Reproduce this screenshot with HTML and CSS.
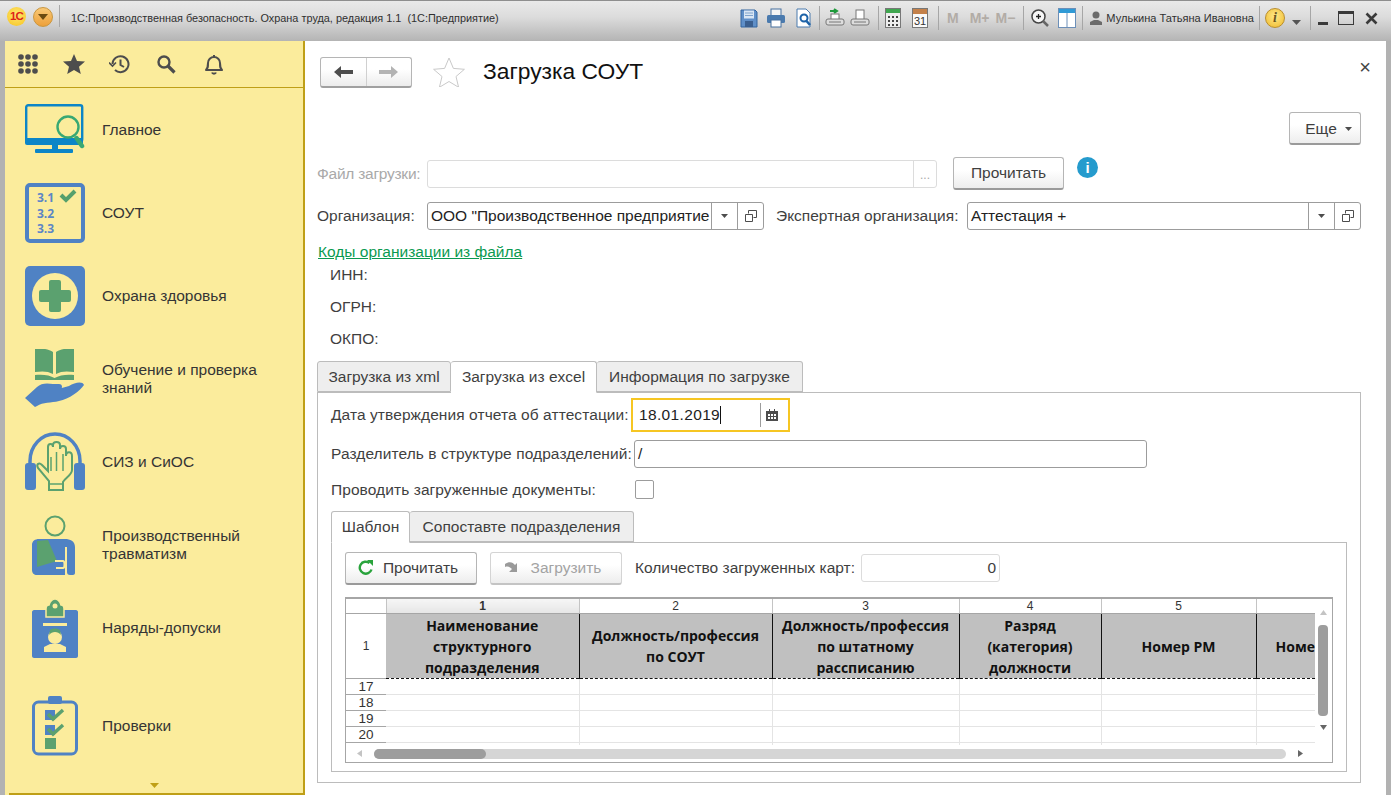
FILE: index.html
```html
<!DOCTYPE html>
<html lang="ru">
<head>
<meta charset="utf-8">
<title>Загрузка СОУТ</title>
<link rel="stylesheet" href="styles.css">
</head>
<body>
<div class="app">
  <header class="titlebar">
    <div class="logo-1c">1С</div>
    <div class="menu-circle"><svg width="10" height="6" viewBox="0 0 10 6"><path d="M0 0h10L5 6z" fill="#6b4a10"/></svg></div>
    <div class="tb-sep first"></div>
    <div class="app-title">1С:Производственная безопасность. Охрана труда, редакция 1.1&nbsp; (1С:Предприятие)</div>
    <div class="tools">
      <svg class="ti" width="18" height="20" viewBox="0 0 18 20"><path d="M1 2h14l2 2v15H1z" fill="#5f8fc8" stroke="#33649f"/><rect x="4" y="2.500" width="10" height="8" fill="#d9e6f4"/><path d="M5 5h8M5 7.500h8" stroke="#7fa3cc"/><rect x="5" y="13" width="8" height="6" fill="#3a5f8f"/></svg>
      <svg class="ti" width="20" height="20" viewBox="0 0 20 20"><rect x="5" y="1" width="10" height="7" fill="#f4f4f4" stroke="#47709f"/><rect x="1" y="7" width="18" height="8" rx="1.500" fill="#4a7aae"/><rect x="5" y="12" width="10" height="7" fill="#fff" stroke="#47709f"/></svg>
      <svg class="ti" width="18" height="20" viewBox="0 0 18 20"><path d="M2 1h9l4 4v14H2z" fill="#fff" stroke="#4a7aae"/><circle cx="9" cy="10" r="3.500" fill="none" stroke="#1c62a8" stroke-width="2"/><path d="M11.500 13l3.500 4" stroke="#1c62a8" stroke-width="2.500"/></svg>
      <i class="tsep s1"></i>
      <svg class="ti" width="20" height="20" viewBox="0 0 20 20"><path d="M5 3h7M9 1l3 2-3 2" fill="none" stroke="#1f9a3c" stroke-width="2"/><rect x="6" y="6" width="8" height="6" fill="#fff" stroke="#777"/><rect x="1" y="11" width="18" height="6" rx="2" fill="#ddd" stroke="#777"/><path d="M4 14h12" stroke="#777"/></svg>
      <svg class="ti" width="20" height="20" viewBox="0 0 20 20"><rect x="6" y="2" width="8" height="10" fill="#fff" stroke="#777"/><rect x="1" y="11" width="18" height="6" rx="2" fill="#ddd" stroke="#777"/><path d="M4 14h12" stroke="#777"/></svg>
      <i class="tsep s2"></i>
      <svg class="ti" width="16" height="20" viewBox="0 0 16 20"><rect x=".5" y=".5" width="15" height="19" fill="#eee" stroke="#777"/><rect x="1" y="1" width="14" height="4" fill="#3fa64f"/><path d="M3 8h2v2H3zM7 8h2v2H7zM11 8h2v2h-2zM3 12h2v2H3zM7 12h2v2H7zM11 12h2v2h-2zM3 16h2v2H3zM7 16h2v2H7zM11 16h2v2h-2z" fill="#444"/></svg>
      <svg class="ti" width="16" height="20" viewBox="0 0 16 20"><rect x=".5" y=".5" width="15" height="19" fill="#fafafa" stroke="#777"/><rect x="1" y="1" width="14" height="5" fill="#c4814a"/><text x="8" y="17" class="cal-num">31</text></svg>
      <i class="tsep s3"></i>
      <span class="mem m1">M</span><span class="mem m2">M+</span><span class="mem m3">M−</span>
      <i class="tsep s4"></i>
      <svg class="ti" width="20" height="20" viewBox="0 0 20 20"><circle cx="8.500" cy="8.500" r="6.500" fill="#f6f6f6" stroke="#444" stroke-width="1.500"/><path d="M6 8.500h5M8.500 6v5" stroke="#222" stroke-width="1.300"/><path d="M13 13l5 5" stroke="#666" stroke-width="2.500"/></svg>
      <svg class="ti" width="18" height="20" viewBox="0 0 18 20"><rect x=".5" y=".5" width="17" height="19" fill="#fff" stroke="#6c8fb8"/><rect x="1" y="1" width="16" height="4" fill="#2f9ad6"/><path d="M9 5v14" stroke="#6c8fb8"/></svg>
      <i class="tsep s5"></i>
      <svg class="ti" width="12" height="14" viewBox="0 0 12 14"><circle cx="6" cy="4" r="3.500" fill="#6b6b6b"/><path d="M0 14v-3l4-2h4l4 2v3z" fill="#6b6b6b"/></svg>
      <span class="user">Мулькина Татьяна Ивановна</span>
      <i class="tsep s6"></i>
      <div class="info-1c">i</div>
      <svg class="ti caret" width="9" height="5" viewBox="0 0 9 5"><path d="M0 0h9L4.500 5z" fill="#555"/></svg>
      <i class="tsep s7"></i>
      <div class="win-min"></div>
      <div class="win-max"></div>
      <svg class="ti" width="13" height="13" viewBox="0 0 13 13"><path d="M1.500 1.500l10 10M11.500 1.500l-10 10" stroke="#3a3a3a" stroke-width="2.600"/></svg>
    </div>
  </header>

  <div class="workspace">
    <aside class="sidebar">
      <div class="side-tools">
        <svg width="20" height="20" viewBox="0 0 20 20" fill="#4d4d4d"><circle cx="3" cy="3" r="2.800"/><circle cx="10" cy="3" r="2.800"/><circle cx="17" cy="3" r="2.800"/><circle cx="3" cy="10" r="2.800"/><circle cx="10" cy="10" r="2.800"/><circle cx="17" cy="10" r="2.800"/><circle cx="3" cy="17" r="2.800"/><circle cx="10" cy="17" r="2.800"/><circle cx="17" cy="17" r="2.800"/></svg>
        <svg class="st-star" width="22" height="20" viewBox="0 0 22 20"><path d="M11 0l3 7 8 .6-6 5.100L17.800 20 11 16l-6.800 4L6 12.700 0 7.600 8 7z" fill="#4d4d4d"/></svg>
        <svg class="st-hist" width="21" height="20" viewBox="0 0 21 20" fill="none" stroke="#4d4d4d" stroke-width="2"><path d="M3.500 10a8 8 0 1 1 2.500 6"/><path d="M0 8.500l3.500 3.500 3.500-3.500" stroke-width="1.600"/><path d="M11.500 5.500V11l3.500 2"/></svg>
        <svg class="st-search" width="19" height="19" viewBox="0 0 19 19" fill="none" stroke="#4d4d4d"><circle cx="7" cy="7" r="5.500" stroke-width="2.400"/><path d="M11 11l6.500 6.500" stroke-width="3.200"/></svg>
        <svg class="st-bell" width="18" height="21" viewBox="0 0 18 21" fill="none" stroke="#4d4d4d" stroke-width="2"><path d="M1 16c2-2 2-3 2-7a6 6 0 0 1 12 0c0 4 0 5 2 7z" stroke-linejoin="round"/><path d="M9 1v2M7 18.500c.5 1.500 3.500 1.500 4 0"/></svg>
      </div>
      <nav class="side-list">
        <a class="side-item">
          <svg class="side-icon" width="60" height="60" viewBox="0 0 60 60"><rect x="1.200" y="5.200" width="56" height="36" rx="2" fill="none" stroke="#0c85c7" stroke-width="2.400"/><path d="M0 38h58v5a2 2 0 0 1-2 2H2a2 2 0 0 1-2-2z" fill="#0c85c7"/><rect x="27" y="45" width="6" height="4" fill="#0c85c7"/><rect x="10" y="49" width="38" height="4" rx="1" fill="#0c85c7"/><circle cx="43" cy="27" r="10.500" fill="#fbec9c" stroke="#39a873" stroke-width="2.400"/><path d="M51.500 38l5.500 8" stroke="#39a873" stroke-width="4.500" stroke-linecap="round"/></svg>
          <span>Главное</span>
        </a>
        <a class="side-item">
          <svg class="side-icon" width="60" height="60" viewBox="0 0 60 60"><rect x="2" y="2" width="56" height="56" rx="3" fill="none" stroke="#4f82c4" stroke-width="4"/><text x="12" y="19" class="soft-num">3.1</text><text x="12" y="35" class="soft-num">3.2</text><text x="12" y="50" class="soft-num">3.3</text><path d="M36 12l5 5 9-9" fill="none" stroke="#55a06c" stroke-width="4"/></svg>
          <span>СОУТ</span>
        </a>
        <a class="side-item">
          <svg class="side-icon" width="60" height="60" viewBox="0 0 60 60"><rect width="60" height="60" rx="5" fill="#4f82c4"/><circle cx="30" cy="30" r="23" fill="#fbec9c"/><path d="M24 16a2 2 0 0 1 2-2h8a2 2 0 0 1 2 2v8h8a2 2 0 0 1 2 2v8a2 2 0 0 1-2 2h-8v8a2 2 0 0 1-2 2h-8a2 2 0 0 1-2-2v-8h-8a2 2 0 0 1-2-2v-8a2 2 0 0 1 2-2h8z" fill="#5ba16f"/></svg>
          <span>Охрана здоровья</span>
        </a>
        <a class="side-item">
          <svg class="side-icon" width="60" height="60" viewBox="0 0 60 60"><path d="M10 0c7-1 14 0 18 3v22c-5-3-11-3-18-2zM49 0c-7-1-14 0-18 3v22c5-3 11-3 18-2z" fill="#5ba16f"/><path d="M10 26c7-1 15 0 19.500 3 5-3 13-4 19.500-3v5H10z" fill="#5ba16f"/><path d="M0 49L12 38c4-4 10-4 16-3h6c4 0 4 5 0 6l-8 1 18-5c6-4 14-5 15-1-4 6-15 14-25 16-8 2-16 1-22 5l-2 1z" fill="#4f82c4"/></svg>
          <span>Обучение и проверка<br>знаний</span>
        </a>
        <a class="side-item">
          <svg class="side-icon" width="60" height="60" viewBox="0 0 60 60"><path d="M5 34V29a25 27 0 0 1 50 0v5" fill="none" stroke="#4f82c4" stroke-width="3.500"/><rect y="31" width="11" height="27" rx="3" fill="#4f82c4"/><rect x="49" y="31" width="11" height="27" rx="3" fill="#4f82c4"/><path d="M24 58V49L13 36c-2-4 1-6 4-3l6 6V15c0-4 5-4 5 0v-2c0-4 7-4 7 0v4c0-4 6-4 6 0v7c0-5 6-5 6 0v14c0 5-7 8-9 12v8z" fill="none" stroke="#5ba16f" stroke-width="2"/><path d="M24 52h13M26 25v14M31.500 20v19M38 22v17" stroke="#5ba16f" stroke-width="1.500"/></svg>
          <span>СИЗ и СиОС</span>
        </a>
        <a class="side-item">
          <svg class="side-icon" width="60" height="60" viewBox="0 0 60 60"><circle cx="30" cy="11" r="9.500" fill="none" stroke="#5ba16f" stroke-width="2"/><path d="M7 30c0-4 3-6 7-6h26c5 0 10 2 10 8v26c0 1-1 2-2 2h-3c-2 0-3-1-3-3V32h-2v28H12c-3 0-5-2-5-5z" fill="#4f82c4"/><path d="M12 26l11-1 9 21-20 6z" fill="#5ba16f"/><path d="M30 46h8c2 0 2 7 0 7h-7" fill="none" stroke="#fbec9c" stroke-width="2"/></svg>
          <span>Производственный<br>травматизм</span>
        </a>
        <a class="side-item">
          <svg class="side-icon" width="60" height="60" viewBox="0 0 60 60"><path d="M7 14c0-1 1-2 2-2h42c1 0 2 1 2 2v44c0 1-1 2-2 2H9c-1 0-2-1-2-2z" fill="#4f82c4"/><path d="M21 19v-8c0-3 2-4 3-4 1-4 4-6 6-6s5 2 6 6c1 0 3 1 3 4v8z" fill="#5ba16f" stroke="#fbec9c" stroke-width="1.500"/><circle cx="30" cy="8" r="2.500" fill="#fbec9c"/><rect x="18" y="25" width="24" height="3" fill="#fbec9c"/><circle cx="30" cy="39" r="7" fill="#fbec9c"/><path d="M19 54v-5l6-3h10l6 3v5z" fill="#fbec9c"/><path d="M24 37c3-4 9-4 12 0l-1-5c-3-2-8-2-10 0z" fill="#5ba16f"/></svg>
          <span>Наряды-допуски</span>
        </a>
        <a class="side-item last">
          <svg class="side-icon" width="60" height="60" viewBox="0 0 60 60"><rect x="8.500" y="6" width="43" height="52" rx="5" fill="none" stroke="#4f82c4" stroke-width="3"/><rect x="23" y="0" width="14" height="8" rx="2" fill="#4f82c4"/><rect x="20" y="14" width="10" height="10" fill="#4f82c4"/><rect x="20" y="29" width="10" height="10" fill="#4f82c4"/><rect x="20" y="42" width="11" height="11" fill="#5ba16f"/><path d="M23 18l5 5 10-9M23 33l5 5 10-9" fill="none" stroke="#5ba16f" stroke-width="3.500"/></svg>
          <span>Проверки</span>
        </a>
      </nav>
      <div class="side-more"><svg width="9" height="5" viewBox="0 0 9 5"><path d="M0 0h9L4.500 5z" fill="#bf9f17"/></svg></div>
      <div class="side-bottom"></div>
    </aside>

    <main class="main">
      <div class="head">
        <div class="nav-btns">
          <div class="nav-btn"><svg width="19" height="12" viewBox="0 0 19 12"><path d="M0 6l7-6v4h12v4H7v4z" fill="#4d4d4d"/></svg></div>
          <div class="nav-btn right"><svg width="19" height="12" viewBox="0 0 19 12"><path d="M19 6l-7-6v4H0v4h12v4z" fill="#b3b3b3"/></svg></div>
        </div>
        <svg class="fav" width="32" height="30" viewBox="0 0 32 30"><path d="M16 1l4.400 10.400 11 .9-8.400 7.200 2.600 10.800L16 24.500 6.400 30.300 9 19.500.6 12.300l11-.9z" fill="#fff" stroke="#c9c9c9"/></svg>
        <h1>Загрузка СОУТ</h1>
        <div class="close">×</div>
      </div>

      <div class="more-row">
        <div class="btn more">Еще<svg width="7" height="4" viewBox="0 0 7 4"><path d="M0 0h7L3.500 4z" fill="#4d4d4d"/></svg></div>
      </div>

      <div class="row file-row">
        <label class="lbl first disabled">Файл загрузки:</label>
        <div class="field disabled file-field"><span class="val"></span><span class="dots">...</span></div>
        <div class="btn read">Прочитать</div>
        <div class="info">i</div>
      </div>

      <div class="row org-row">
        <label class="lbl first">Организация:</label>
        <div class="field org"><span class="val">ООО "Производственное предприятие</span>
          <span class="fb"><svg width="7" height="4" viewBox="0 0 7 4"><path d="M0 0h7L3.500 4z" fill="#4d4d4d"/></svg></span>
          <span class="fb"><svg width="12" height="12" viewBox="0 0 12 12" fill="none" stroke="#4d4d4d"><path d="M3.500 3.500V.5h8v7h-3"/><path d="M.5 4.500h7v7h-7z"/></svg></span>
        </div>
        <label class="lbl exp">Экспертная организация:</label>
        <div class="field expert"><span class="val">Аттестация +</span>
          <span class="fb"><svg width="7" height="4" viewBox="0 0 7 4"><path d="M0 0h7L3.500 4z" fill="#4d4d4d"/></svg></span>
          <span class="fb"><svg width="12" height="12" viewBox="0 0 12 12" fill="none" stroke="#4d4d4d"><path d="M3.500 3.500V.5h8v7h-3"/><path d="M.5 4.500h7v7h-7z"/></svg></span>
        </div>
      </div>

      <a class="link">Коды организации из файла</a>
      <div class="code code-first">ИНН:</div>
      <div class="code">ОГРН:</div>
      <div class="code">ОКПО:</div>

      <div class="tabs">
        <div class="tab t-xml">Загрузка из xml</div>
        <div class="tab active t-excel">Загрузка из excel</div>
        <div class="tab t-info">Информация по загрузке</div>
      </div>
      <section class="panel">
        <div class="row date-row">
          <label class="lbl wide">Дата утверждения отчета об аттестации:</label>
          <div class="date-field"><span class="val">18.01.2019<i class="cursor"></i></span>
            <span class="cal"><svg width="12" height="12" viewBox="0 0 12 12"><path d="M0 2h3V0h1v2h4V0h1v2h3v10H0z" fill="#4d4d4d"/><path d="M2 5h2v2H2zM5 5h2v2H5zM8 5h2v2H8zM2 8h2v2H2zM5 8h2v2H5zM8 8h2v2H8z" fill="#fff"/></svg></span>
          </div>
        </div>
        <div class="row sep-row">
          <label class="lbl wide">Разделитель в структуре подразделений:</label>
          <div class="field sep-field"><span class="val">/</span></div>
        </div>
        <div class="row check-row">
          <label class="lbl wide">Проводить загруженные документы:</label>
          <div class="check"></div>
        </div>

        <div class="tabs inner">
          <div class="tab active t-tpl">Шаблон</div>
          <div class="tab t-match">Сопоставте подразделения</div>
        </div>
        <section class="panel subpanel">
          <div class="row tool-row">
            <div class="btn ic-btn"><svg width="16" height="16" viewBox="0 0 16 16" fill="none"><path d="M13.500 9.500A6 6 0 1 1 11.500 3" stroke="#29a33c" stroke-width="2.400"/><path d="M9 0h6v6z" fill="#29a33c"/></svg>Прочитать</div>
            <div class="btn ic-btn off"><svg width="17" height="14" viewBox="0 0 17 14"><path d="M0 3c4-3 8-2 10 1l2-2v9H4l3-3C5 6 3 5 0 6z" fill="#9a9a9a"/></svg>Загрузить</div>
            <label class="lbl count">Количество загруженных карт:</label>
            <div class="field count-field">0</div>
          </div>

          <div class="sheet">
            <div class="sheet-top">
              <div class="grid-clip">
                <table class="grid">
                  <colgroup><col class="c0"><col class="c1"><col class="c2"><col class="c3"><col class="c4"><col class="c5"><col class="c6"></colgroup>
                  <tr class="col-heads"><th></th><th class="cur">1</th><th>2</th><th>3</th><th>4</th><th>5</th><th></th></tr>
                  <tr class="head-row">
                    <th class="rn">1</th>
                    <td>Наименование<br>структурного<br>подразделения</td>
                    <td>Должность/профессия<br>по СОУТ</td>
                    <td>Должность/профессия<br>по штатному<br>рассписанию</td>
                    <td>Разряд<br>(категория)<br>должности</td>
                    <td>Номер РМ</td>
                    <td class="clip"><span>Номер</span></td>
                  </tr>
                  <tr><th class="rn">17</th><td></td><td></td><td></td><td></td><td></td><td></td></tr>
                  <tr><th class="rn">18</th><td></td><td></td><td></td><td></td><td></td><td></td></tr>
                  <tr><th class="rn">19</th><td></td><td></td><td></td><td></td><td></td><td></td></tr>
                  <tr><th class="rn">20</th><td></td><td></td><td></td><td></td><td></td><td></td></tr>
                  <tr><th class="rn"></th><td></td><td></td><td></td><td></td><td></td><td></td></tr>
                </table>
              </div>
              <div class="vscroll">
                <svg width="7" height="5" viewBox="0 0 7 5"><path d="M3.500 0L7 5H0z" fill="#c4c4c4"/></svg>
                <div class="vthumb"></div>
                <svg width="7" height="5" viewBox="0 0 7 5"><path d="M3.500 5L7 0H0z" fill="#666"/></svg>
              </div>
            </div>
            <div class="hscroll">
              <svg width="5" height="7" viewBox="0 0 5 7"><path d="M0 3.500L5 0v7z" fill="#c4c4c4"/></svg>
              <div class="htrack"><div class="hthumb"></div></div>
              <svg width="5" height="7" viewBox="0 0 5 7"><path d="M5 3.500L0 0v7z" fill="#666"/></svg>
            </div>
          </div>
        </section>
      </section>
    </main>
  </div>
</div>
</body>
</html>
```

FILE: styles.css
```css
* { box-sizing: border-box; }
html, body { margin: 0; height: 795px; overflow: hidden; }
body { background: #b2b2b2; font-family: "Liberation Sans", Arial, sans-serif; font-size: 15.5px; color: #3f3f3f; }
.app { display: flex; flex-direction: column; height: 795px; }

/* title bar */
.titlebar { height: 41px; flex: none; display: flex; align-items: flex-start; padding-top: 6px; background: linear-gradient(#e9e9e9 0, #dcdcdc 40%, #b4b4b4 100%); border-top: 1px solid #8e8e8e; }
.logo-1c { width: 19px; height: 19px; margin-left: 7px; border-radius: 50%; background: radial-gradient(circle at 50% 40%, #ffe873, #f6c21c); color: #dd2418; font: bold 11.5px/19px "Liberation Sans", sans-serif; text-align: center; letter-spacing: -0.8px; }
.menu-circle { width: 20px; height: 20px; margin-left: 7px; border-radius: 50%; background: linear-gradient(#f9c977, #eda03a); border: 1px solid #c9963f; display: flex; align-items: center; justify-content: center; }
.tb-sep.first { width: 1px; height: 22px; background: #a8a8a8; margin-left: 6px; margin-top: -2px; }
.app-title { margin-left: 11px; font: 10.9px/22px "Liberation Sans", sans-serif; color: #303030; white-space: nowrap; }
.tools { margin-left: auto; display: flex; align-items: center; height: 22px; width: 651px; flex: none; }
.tools .ti { flex: none; }
.tools > :nth-child(2) { margin-left: 8px; }
.tools > :nth-child(3) { margin-left: 9px; }
.tsep { width: 1px; height: 24px; background: #a6a6a6; flex: none; }
.tools .s1 { margin-left: 6px; }
.tools .s1 + svg { margin-left: 5px; }
.tools .s1 + svg + svg { margin-left: 5px; }
.tools .s2 { margin-left: 8px; }
.tools .s2 + svg { margin-left: 6px; }
.tools .s2 + svg + svg { margin-left: 11px; }
.tools .s3 { margin-left: 10px; }
.mem { font: bold 14px/22px "Liberation Sans", sans-serif; color: #b2aca6; flex: none; }
.m1 { margin-left: 8px; }
.m2 { margin-left: 11px; }
.m3 { margin-left: 6px; }
.tools .s4 { margin-left: 8px; }
.tools .s4 + svg { margin-left: 6px; }
.tools .s4 + svg + svg { margin-left: 8px; }
.tools .s5 { margin-left: 6px; }
.tools .s5 + svg { margin-left: 7px; }
.user { margin-left: 4px; font: 11.05px/22px "Liberation Sans", sans-serif; color: #303030; white-space: nowrap; flex: none; }
.tools .s6 { margin-left: 5px; }
.info-1c { width: 20px; height: 20px; margin-left: 5px; border-radius: 50%; background: radial-gradient(circle at 50% 40%, #ffe98a, #efb92a); border: 1px solid #b98e2e; color: #6a5520; font: italic bold 14px/18px "Liberation Serif", serif; text-align: center; flex: none; }
.tools .caret { margin-left: 7px; margin-top: 8px; }
.tools .s7 { margin-left: 9px; }
.win-min { width: 10px; height: 3px; background: #3a3a3a; margin-left: 7px; margin-top: 10px; flex: none; }
.win-max { width: 16px; height: 14px; border: 1px solid #3a3a3a; border-top-width: 3px; margin-left: 10px; flex: none; }
.tools > svg:last-child { margin-left: 11px; }
.cal-num { font: 11px "Liberation Sans", sans-serif; fill: #333; text-anchor: middle; }

/* workspace */
.workspace { flex: 1; display: flex; margin: 0 5px; min-height: 0; }

/* sidebar */
.sidebar { width: 300px; flex: none; background: #fbec9c; border-right: 2px solid #bf9f17; display: flex; flex-direction: column; }
.side-tools { height: 47px; flex: none; display: flex; align-items: center; padding-left: 13px; border-bottom: 1px solid #bf9f17; }
.st-star { margin-left: 25px; }
.st-hist { margin-left: 24px; }
.st-search { margin-left: 27px; }
.st-bell { margin-left: 29px; }
.side-list { flex: 1; display: flex; flex-direction: column; min-height: 0; }
.side-item { height: 83px; flex: none; display: flex; align-items: center; padding-left: 20px; color: #353535; line-height: 18px; }
.side-item.last { margin-top: 15px; }
.side-item span { margin-left: 17px; }
.side-icon { flex: none; }
.soft-num { font: bold 12px "Open Sans", sans-serif; fill: #5c86c6; }
.side-more { height: 10px; flex: none; display: flex; justify-content: center; align-items: flex-start; }
.side-bottom { height: 2px; flex: none; margin-left: 4px; background: #bf9f17; }

/* main */
.main { flex: 1; min-width: 0; background: #fff; padding: 16px 25px 0 12px; display: flex; flex-direction: column; }
.head { display: flex; align-items: flex-start; height: 31px; flex: none; }
.nav-btns { display: flex; margin-left: 3px; width: 92px; height: 31px; border: 1px solid #b5b5b5; border-bottom: 2px solid #a0a0a0; border-radius: 3px; background: linear-gradient(#fff 40%, #ececec); }
.nav-btn { width: 46px; display: flex; align-items: center; justify-content: center; }
.nav-btn.right { border-left: 1px solid #d0d0d0; }
.fav { margin-left: 21px; }
h1 { margin: 0 0 0 18px; font: 400 22.8px/28px "Liberation Sans", sans-serif; color: #111; }
.close { margin-left: auto; margin-right: -10px; font: 20px/20px "Liberation Sans", sans-serif; color: #444; }
.more-row { display: flex; justify-content: flex-end; margin-top: 24px; flex: none; }
.btn { height: 33px; display: flex; align-items: center; justify-content: center; border: 1px solid #b5b5b5; border-bottom: 2px solid #9a9a9a; border-radius: 3px; background: linear-gradient(#fff 40%, #ededed); color: #3f3f3f; flex: none; }
.btn.more { width: 72px; gap: 8px; padding: 1px 0 0 7px; }
.row { display: flex; align-items: center; flex: none; }
.file-row { margin-top: 12px; height: 33px; align-items: flex-start; }
.file-row .lbl { line-height: 33px; height: 33px; letter-spacing: -0.25px; }
.lbl { white-space: nowrap; flex: none; }
.lbl.first { width: 110px; }
.disabled { color: #a9a9a9; }
.field { height: 28px; border: 1px solid #9c9c9c; border-radius: 3px; background: #fff; display: flex; align-items: center; flex: none; color: #222; }
.field.disabled { border-color: #dcdcdc; }
.val { flex: 1; min-width: 0; padding-left: 3px; white-space: nowrap; overflow: hidden; }
.file-field { width: 510px; margin-top: 3px; }
.dots { width: 23px; height: 100%; border-left: 1px solid #dcdcdc; color: #a9a9a9; text-align: center; line-height: 28px; font-size: 12px; }
.read { width: 111px; margin-left: 16px; }
.info { width: 21px; height: 21px; margin-left: 13px; border-radius: 50%; background: #259bcd; color: #fff; font: bold 15px/21px "Liberation Sans", sans-serif; text-align: center; }
.org-row { margin-top: 12px; height: 28px; }
.fb { width: 26px; height: 100%; border-left: 1px solid #9c9c9c; display: flex; align-items: center; justify-content: center; flex: none; }
.org { width: 337px; }
.exp { margin-left: 12px; width: 191px; }
.expert { width: 394px; }
.link { display: block; align-self: flex-start; margin: 14px 0 0 1px; line-height: 16px; color: #0a9a50; text-decoration: underline; white-space: nowrap; flex: none; }
.code { height: 32px; line-height: 32px; padding-left: 13px; flex: none; }
.code-first { margin-top: -1px; }

/* tabs */
.tabs { display: flex; margin-top: 6px; height: 31px; flex: none; position: relative; z-index: 1; }
.tab { height: 31px; line-height: 29px; text-align: center; border: 1px solid #bcbcbc; border-left-width: 0; border-radius: 3px 3px 0 0; background: #eeeeee; color: #3f3f3f; }
.tab:first-child { border-left-width: 1px; }
.tab.active { background: #fff; border-bottom-color: #fff; height: 32px; }
.t-xml { width: 134px; }
.t-excel { width: 146px; }
.t-info { width: 206px; }
.t-tpl { width: 79px; }
.t-match { width: 224px; }
.panel { border: 1px solid #bcbcbc; flex: none; }
.main > .panel { height: 391px; padding: 5px 13px 0 13px; }
.lbl.wide { width: 300px; letter-spacing: 0.08px; }
.date-row { height: 34px; }
.date-field { width: 159px; height: 34px; border: 2px solid #f6c623; display: flex; align-items: center; background: #fff; color: #222; }
.date-field .val { padding-left: 6px; letter-spacing: 0.35px; }
.cursor { display: inline-block; width: 1px; height: 18px; background: #111; vertical-align: -4px; }
.cal { width: 28px; height: 24px; border-left: 1px solid #9c9c9c; display: flex; align-items: center; justify-content: center; flex: none; padding-right: 5px; }
.sep-row { margin-top: 8px; height: 28px; }
.sep-field { width: 513px; margin-left: 3px; }
.check-row { margin-top: 12px; height: 19px; }
.check { width: 19px; height: 19px; border: 1px solid #9c9c9c; border-radius: 2px; margin-left: 4px; }
.tabs.inner { margin-top: 12px; }
.subpanel { height: 230px; padding: 8px 13px 0 13px; width: 1016px; }
.tool-row { height: 34px; }
.ic-btn { width: 132px; gap: 9px; padding-right: 6px; }
.ic-btn.off { margin-left: 13px; color: #a3a3a3; border-color: #d4d4d4; border-bottom-color: #c4c4c4; }
.count { margin-left: 13px; width: 226px; }
.count-field { width: 139px; justify-content: flex-end; padding-right: 3px; border-color: #dcdcdc; color: #3f3f3f; }

/* sheet */
.sheet { margin-top: 12px; width: 988px; height: 166px; border: 1px solid #a6a6a6; border-top: 2px solid #a6a6a6; display: flex; flex-direction: column; background: #fff; }
.sheet-top { height: 146px; flex: none; display: flex; }
.grid-clip { width: 969px; height: 146px; overflow: hidden; flex: none; }
.grid { table-layout: fixed; border-collapse: collapse; width: 969px; font-family: "Liberation Sans", sans-serif; }
.c0 { width: 40px; } .c1 { width: 193px; } .c2 { width: 193px; } .c3 { width: 187px; } .c4 { width: 142px; } .c5 { width: 155px; } .c6 { width: 59px; }
.grid th, .grid td { padding: 0; overflow: hidden; }
.grid tr { height: 16px; }
.grid tr.col-heads { height: 14px; }
.grid .col-heads th { height: 14px; padding-top: 1px; font: 400 12px/12px "Liberation Sans", sans-serif; color: #333; border-right: 1px solid #c4c4c4; border-bottom: 1px solid #a6a6a6; background: #fff; }
.grid .col-heads th.cur { font-weight: 700; background: linear-gradient(#f6f6f6, #e6e6e6); }
.col-heads th:last-child { border-right: 0; }
.rn { font: 400 13.5px/15px "Liberation Sans", sans-serif; color: #333; text-align: center; border-bottom: 1px solid #a6a6a6; background: #fff; }
.grid td { border-right: 1px solid #e4e4e4; border-bottom: 1px solid #e4e4e4; }
.grid td:last-child { border-right: 0; }
.grid tr.head-row { height: 64px; }
.grid .head-row td { background: #c0c0c0; border-right: 1px solid #111; border-bottom: 1px dashed #111; font: 700 14px/21px "Open Sans", "Noto Sans", sans-serif; color: #111; text-align: center; padding: 1px 2px 0; }
.grid .head-row td.clip { text-align: left; padding-left: 19px; white-space: nowrap; border-right: 0; }
.head-row th.rn { font-size: 12px; line-height: 16px; }
.vscroll { width: 17px; flex: none; display: flex; flex-direction: column; align-items: center; padding-top: 11px; }
.vthumb { width: 10px; height: 91px; background: #9d9d9d; border-radius: 4px; margin: 10px 2px 0 0; }
.vscroll svg:last-child { margin-top: 9px; }
.hscroll { height: 17px; flex: none; display: flex; align-items: center; padding-left: 11px; }
.htrack { width: 912px; height: 10px; margin-left: 12px; background: #d5d5d5; border-radius: 5px; }
.hthumb { width: 112px; height: 10px; background: #9d9d9d; border-radius: 5px; }
.hscroll svg:last-child { margin-left: 12px; }
```
